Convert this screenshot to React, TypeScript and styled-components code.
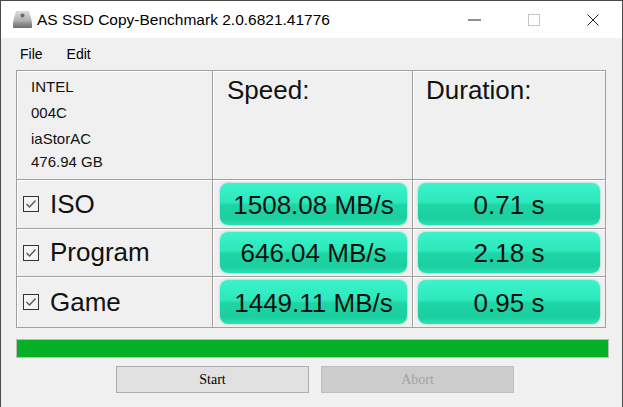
import { Fragment } from 'react';
import styled, { createGlobalStyle } from 'styled-components';

const GlobalStyle = createGlobalStyle`
  html, body, #root {
    margin: 0;
    padding: 0;
    height: 100%;
  }
  body {
    background: #f0f0f0;
    font-family: "Liberation Sans", Arial, sans-serif;
    color: #111;
    overflow: hidden;
  }
`;

const Window = styled.div`
  box-sizing: border-box;
  width: 623px;
  height: 407px;
  display: flex;
  flex-direction: column;
  background: #f0f0f0;
  border-top: 1px solid #4a4a4a;
  border-left: 1px solid #4a4a4a;
  border-right: 1px solid #4a4a4a;
`;

const TitleBar = styled.div`
  height: 37px;
  display: flex;
  align-items: center;
  background: #fff;
  padding-left: 11px;
`;

const Title = styled.span`
  flex: 1;
  margin-left: 4px;
  font-size: 15.5px;
  color: #000;
  white-space: nowrap;
`;

const ControlButton = styled.div`
  width: 59px;
  height: 37px;
  display: flex;
  align-items: center;
  justify-content: center;
`;

const MenuBar = styled.div`
  height: 32px;
  display: flex;
  align-items: center;
  gap: 24px;
  padding-left: 19px;
  font-size: 14px;
  color: #000;
`;

const Table = styled.div`
  display: grid;
  grid-template-columns: 196px 200px 193px;
  grid-template-rows: 109px 49px 48px 51px;
  margin-left: 15px;
  width: fit-content;
  border-left: 1px solid #a0a0a0;
  border-top: 1px solid #a0a0a0;
`;

const Cell = styled.div<{ $pad?: string }>`
  box-sizing: border-box;
  border-right: 1px solid #a0a0a0;
  border-bottom: 1px solid #a0a0a0;
  box-shadow: inset 1px 1px 0 #fff;
  padding: ${(p) => p.$pad ?? '0'};
  display: flex;
`;

const InfoCell = styled(Cell)`
  flex-direction: column;
`;

const InfoLine = styled.div<{ $tight?: boolean }>`
  font-size: 15px;
  line-height: 26px;
  margin-top: ${(p) => (p.$tight ? '-3px' : '0')};
  color: #111;
`;

const HeaderText = styled.div`
  font-size: 26px;
  line-height: 30px;
  color: #111;
`;

const LabelCell = styled(Cell)`
  align-items: center;
  gap: 11px;
`;

const Label = styled.span`
  font-size: 26px;
  color: #111;
`;

const ResultBox = styled.div`
  flex: 1;
  border-radius: 8px;
  display: flex;
  align-items: center;
  justify-content: center;
  padding-top: 2px;
  font-size: 26px;
  color: #111;
  background: linear-gradient(
    180deg,
    #3cf3ca 0%,
    #2ce8bc 46%,
    #1fd5a5 52%,
    #1bcf9f 84%,
    #2ce2b3 100%
  );
  box-shadow: 0 0 2px rgba(0, 170, 130, 0.55);
`;

const ProgressBar = styled.div`
  box-sizing: border-box;
  margin: 11px 0 0 15px;
  width: 593px;
  height: 19px;
  border: 1px solid #bcbcbc;
  background: #06b025;
`;

const ButtonRow = styled.div`
  display: flex;
  gap: 12px;
  margin: 8px 0 0 115px;
`;

const Button = styled.div<{ $disabled?: boolean }>`
  box-sizing: border-box;
  width: 193px;
  height: 27px;
  display: flex;
  align-items: center;
  justify-content: center;
  font-family: "Liberation Serif", "Times New Roman", serif;
  font-size: 14px;
  color: ${(p) => (p.$disabled ? '#a3a3a3' : '#000')};
  background: ${(p) => (p.$disabled ? '#cccccc' : '#e1e1e1')};
  border: 1px solid ${(p) => (p.$disabled ? '#bfbfbf' : '#adadad')};
`;

function DriveIcon() {
  return (
    <svg width="21" height="19" viewBox="0 0 21 19">
      <defs>
        <linearGradient id="driveTop" x1="0" y1="0" x2="0" y2="1">
          <stop offset="0" stopColor="#dcdcdc" />
          <stop offset="1" stopColor="#a9a9a9" />
        </linearGradient>
        <linearGradient id="driveFront" x1="0" y1="0" x2="0" y2="1">
          <stop offset="0" stopColor="#9c9c9c" />
          <stop offset="1" stopColor="#6c6c6c" />
        </linearGradient>
      </defs>
      <path d="M4 1 H17 L20 12 H1 Z" fill="url(#driveTop)" />
      <rect x="1" y="12" width="19" height="6" rx="1" fill="url(#driveFront)" />
      <circle cx="10.5" cy="5.5" r="2" fill="#6a6a6a" />
    </svg>
  );
}

function CheckBox() {
  return (
    <svg width="16" height="16" viewBox="0 0 16 16">
      <rect x="0.5" y="0.5" width="15" height="15" fill="#f4f4f4" stroke="#333" />
      <polyline points="3.5,8 6.5,11 12.5,4.5" fill="none" stroke="#555" strokeWidth="1.3" />
    </svg>
  );
}

const rows = [
  { name: 'ISO', speed: '1508.08 MB/s', time: '0.71 s' },
  { name: 'Program', speed: '646.04 MB/s', time: '2.18 s' },
  { name: 'Game', speed: '1449.11 MB/s', time: '0.95 s' },
];

export default function App() {
  return (
    <>
      <GlobalStyle />
      <Window>
        <TitleBar>
          <DriveIcon />
          <Title>AS SSD Copy-Benchmark 2.0.6821.41776</Title>
          <ControlButton>
            <svg width="13" height="2" viewBox="0 0 13 2">
              <line x1="0" y1="1" x2="13" y2="1" stroke="#222" strokeWidth="1" />
            </svg>
          </ControlButton>
          <ControlButton>
            <svg width="12" height="12" viewBox="0 0 12 12">
              <rect x="0.5" y="0.5" width="11" height="11" fill="none" stroke="#c4c4c4" />
            </svg>
          </ControlButton>
          <ControlButton>
            <svg width="12" height="12" viewBox="0 0 12 12">
              <path d="M0.5 0.5 L11.5 11.5 M11.5 0.5 L0.5 11.5" stroke="#222" strokeWidth="1" />
            </svg>
          </ControlButton>
        </TitleBar>

        <MenuBar>
          <span>File</span>
          <span>Edit</span>
        </MenuBar>

        <Table>
          <InfoCell $pad="3px 0 0 14px">
            <InfoLine>INTEL</InfoLine>
            <InfoLine>004C</InfoLine>
            <InfoLine>iaStorAC</InfoLine>
            <InfoLine $tight>476.94 GB</InfoLine>
          </InfoCell>
          <Cell $pad="4px 0 0 14px">
            <HeaderText>Speed:</HeaderText>
          </Cell>
          <Cell $pad="4px 0 0 13px">
            <HeaderText>Duration:</HeaderText>
          </Cell>

          {rows.map((r) => (
            <Fragment key={r.name}>
              <LabelCell $pad="0 0 0 6px">
                <CheckBox />
                <Label>{r.name}</Label>
              </LabelCell>
              <Cell $pad="3px 5px 3px 7px">
                <ResultBox>{r.speed}</ResultBox>
              </Cell>
              <Cell $pad="3px 5px 3px 5px">
                <ResultBox>{r.time}</ResultBox>
              </Cell>
            </Fragment>
          ))}
        </Table>

        <ProgressBar />

        <ButtonRow>
          <Button>Start</Button>
          <Button $disabled>Abort</Button>
        </ButtonRow>
      </Window>
    </>
  );
}
